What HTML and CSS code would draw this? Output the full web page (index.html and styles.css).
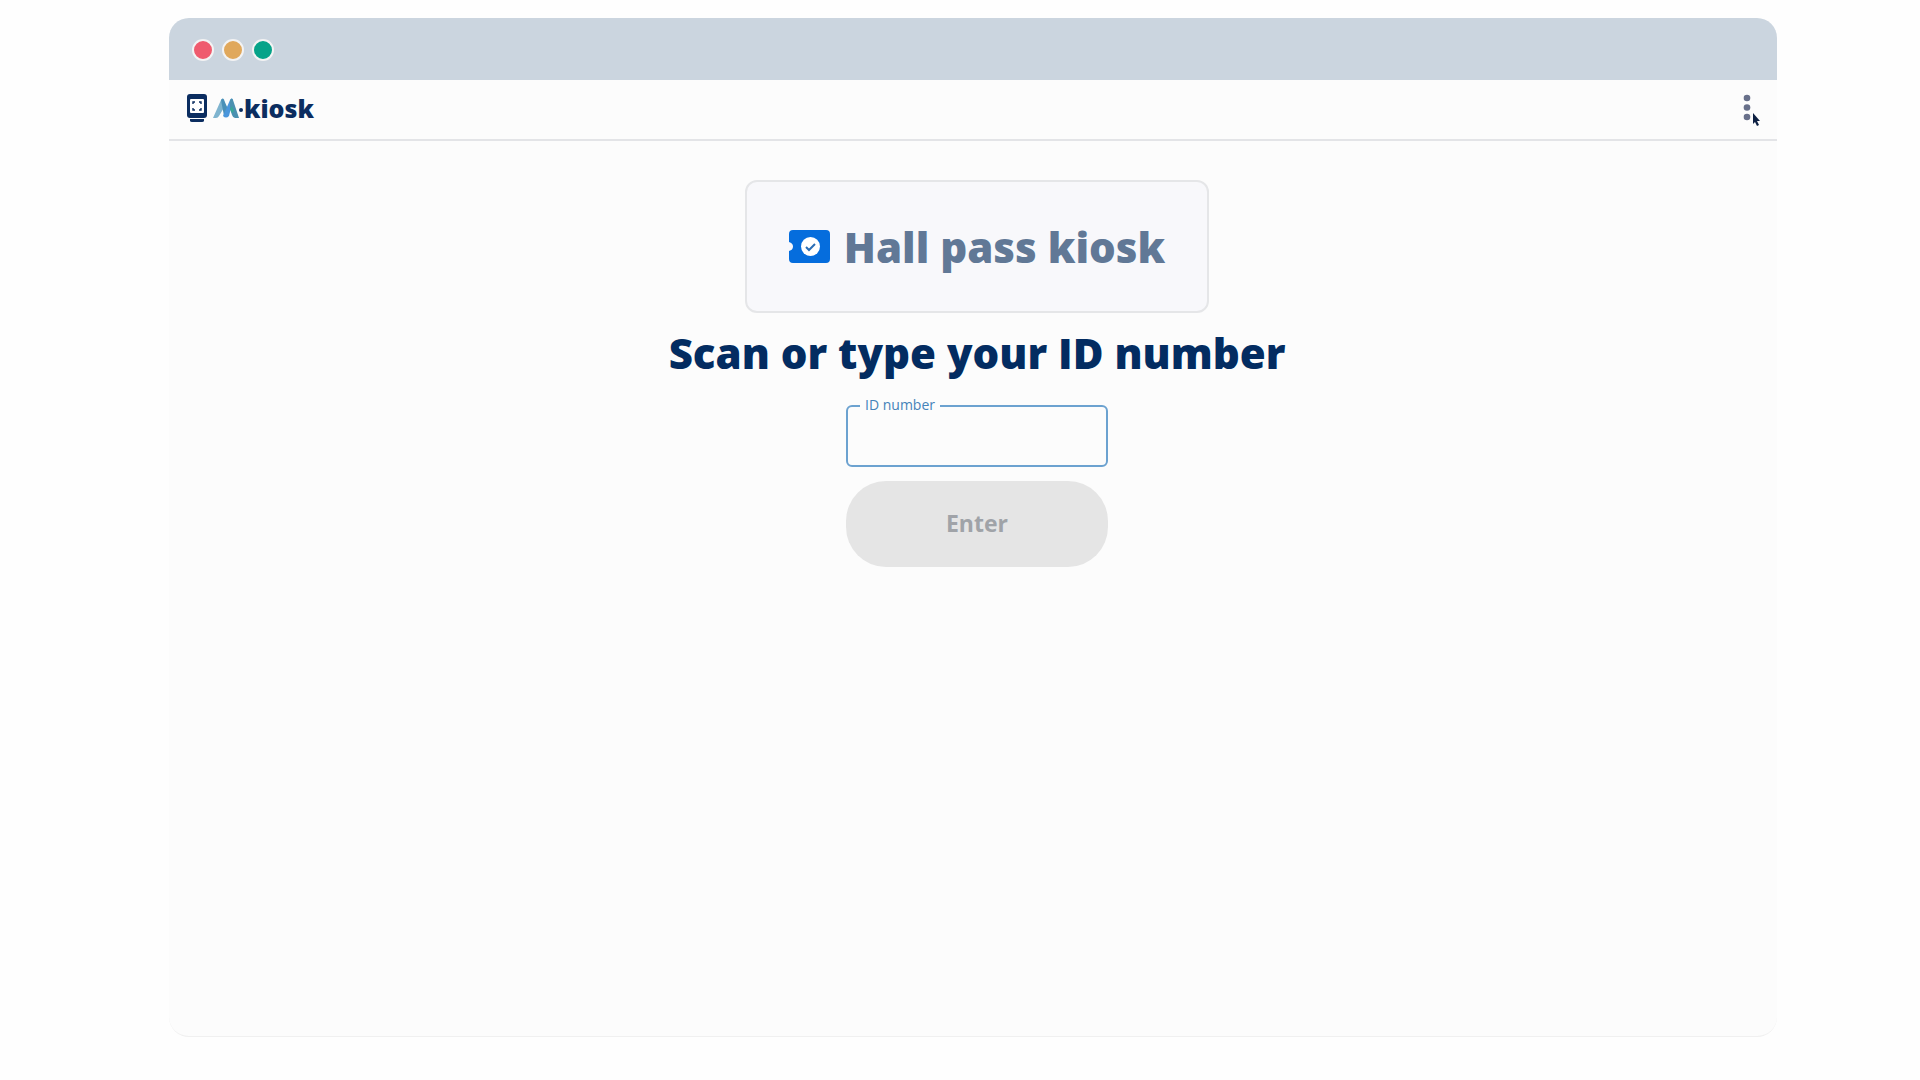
FILE: index.html
```html
<!DOCTYPE html>
<html lang="en">
<head>
    <meta charset="UTF-8">
    <meta name="viewport" content="width=device-width, initial-scale=1.0">
    <title>Hall pass kiosk</title>
    <link rel="stylesheet" href="styles.css">
</head>
<body>
    <div class="window">
        <div class="title-bar">
            <span class="dot dot-red"></span>
            <span class="dot dot-yellow"></span>
            <span class="dot dot-green"></span>
        </div>

        <header class="header">
            <a class="brand" href="#">
                <svg class="brand-device" viewBox="0 0 20 28" aria-hidden="true">
                    <rect width="20" height="24" rx="3" fill="#0b2d60"/>
                    <rect x="3" y="5" width="14" height="14" rx="1" fill="#fff"/>
                    <path d="M6 10V8h2M12 8h2v2M14 14v2h-2M8 16H6v-2" fill="none" stroke="#0b2d60" stroke-width="1.4"/>
                    <path d="M3 25h14v1.500q0 1.500-2 1.500H5q-2 0-2-1.500z" fill="#0b2d60"/>
                </svg>
                <svg class="brand-mark" viewBox="0 0 26 20" aria-hidden="true">
                    <path d="M0 20 8 2q1-2 3-1l1 7-6 10q-1 2-3 2z" fill="#7fb4cf"/>
                    <path d="M8 2q2-3 3 0l4 9-4 7z" fill="#4a90b8"/>
                    <path d="M10 18 17 2q2-3 3 0l-4 16q-3 3-6 0z" fill="#4a96dc"/>
                    <path d="M17 2q2-3 3 0l6 18h-4q-2 0-3-3l-2-6z" fill="#4a90b0"/>
                    <path d="M17 11l2-3 2 5-2 2z" fill="#38a896"/>
                </svg>
                <span class="brand-dot"></span>
                <span class="brand-name">kiosk</span>
            </a>
            <button class="menu-btn" type="button" aria-label="Menu">
                <svg class="menu-icon" viewBox="0 0 8 28" aria-hidden="true">
                    <circle cx="4" cy="4" r="3.300"/>
                    <circle cx="4" cy="13.500" r="3.300"/>
                    <circle cx="4" cy="23" r="3.300"/>
                </svg>
                <svg class="pointer" viewBox="0 0 8 14" aria-hidden="true">
                    <path d="M1 0v11l2-2 2 4 2-1-2-4h3z"/>
                </svg>
            </button>
        </header>

        <main class="content">
            <div class="kiosk-card">
                <svg class="pass-icon" viewBox="0 0 41 33" aria-hidden="true">
                    <path d="M4 0h33q4 0 4 4v25q0 4-4 4H4q-4 0-4-4v-8q4-1 4-4.500t-4-4.500V4q0-4 4-4z" fill="#056ddd"/>
                    <circle cx="21.500" cy="16.500" r="9.500" fill="#fff"/>
                    <path d="M17 17l3 3 6-6" fill="none" stroke="#2a6db5" stroke-width="2"/>
                </svg>
                <h1 class="kiosk-name">Hall pass kiosk</h1>
            </div>

            <h2 class="prompt">Scan or type your ID number</h2>

            <form class="id-form">
                <div class="field">
                    <label class="field-label" for="id-number">ID number</label>
                    <input class="field-input" id="id-number" type="text" autocomplete="off">
                </div>
                <button class="enter-btn" type="submit" disabled>Enter</button>
            </form>
        </main>
    </div>
</body>
</html>
```
FILE: styles.css
```css
* {
    margin: 0;
    padding: 0;
    box-sizing: border-box;
}

body {
    display: flex;
    min-height: 100vh;
    padding: 18px 143px 43px 169px;
    font-family: "Open Sans", "Noto Sans", sans-serif;
    background: #fefefe;
    color: #032c61;
}

.window {
    flex: 1;
    display: flex;
    flex-direction: column;
    background: #fcfcfc;
    border-bottom: 1px solid #f0f0f0;
    border-radius: 20px;
    overflow: hidden;
}

.title-bar {
    display: flex;
    align-items: center;
    gap: 8px;
    height: 62px;
    padding: 2px 23px 0;
    background: #cbd5df;
}

.dot {
    width: 22px;
    height: 22px;
    border: 2px solid #f3f3f3;
    border-radius: 50%;
}

.dot-red {
    background: #ef5b6e;
}

.dot-yellow {
    background: #e0a85c;
}

.dot-green {
    background: #06a389;
}

.header {
    display: flex;
    align-items: center;
    justify-content: space-between;
    height: 61px;
    padding: 0 22px 4px 18px;
    border-bottom: 2px solid #e3e4e7;
}

.brand {
    display: flex;
    align-items: center;
    color: #0b2d60;
    text-decoration: none;
}

.brand-device {
    width: 20px;
    height: 28px;
    margin-right: 6px;
}

.brand-mark {
    width: 26px;
    height: 20px;
}

.brand-dot {
    width: 4px;
    height: 4px;
    margin: 4px 1px 0 0;
    border-radius: 50%;
    background: #0b2d60;
}

.brand-name {
    font-size: 25px;
    font-weight: 800;
    line-height: 28px;
}

.menu-btn {
    position: relative;
    display: flex;
    width: 12px;
    height: 28px;
    border: none;
    background: none;
    cursor: pointer;
}

.menu-icon {
    width: 8px;
    height: 28px;
    fill: #68708a;
}

.pointer {
    position: absolute;
    top: 19px;
    left: 9px;
    width: 8px;
    height: 14px;
    fill: #0d2042;
}

.content {
    flex: 1;
    display: flex;
    flex-direction: column;
    align-items: center;
    padding: 39px 0 40px 8px;
}

.kiosk-card {
    display: flex;
    align-items: center;
    justify-content: center;
    gap: 14px;
    width: 464px;
    max-width: 100%;
    height: 133px;
    background: #f8f8fb;
    border: 2px solid #e5e6e8;
    border-radius: 12px;
}

.pass-icon {
    width: 41px;
    height: 33px;
}

.kiosk-name {
    font-size: 42px;
    font-weight: 800;
    line-height: 56px;
    color: #617896;
}

.prompt {
    margin: 12px 0 24px;
    font-size: 42px;
    font-weight: 800;
    line-height: 56px;
    text-align: center;
}

.id-form {
    display: flex;
    flex-direction: column;
    gap: 14px;
    width: 262px;
}

.field {
    position: relative;
}

.field-label {
    position: absolute;
    top: -9px;
    left: 14px;
    padding: 0 5px;
    font-size: 14px;
    font-weight: 500;
    line-height: 18px;
    background: #fcfcfc;
    color: #4583b9;
}

.field-input {
    display: block;
    width: 100%;
    height: 62px;
    padding: 0 18px;
    font: inherit;
    font-size: 20px;
    color: #032c61;
    background: transparent;
    border: 2px solid #6ca2d0;
    border-radius: 6px;
    outline: none;
}

.enter-btn {
    height: 86px;
    padding-bottom: 2px;
    font: inherit;
    font-size: 23px;
    font-weight: 700;
    color: #a0a3a8;
    background: #e5e5e5;
    border: none;
    border-radius: 40px;
}
```
